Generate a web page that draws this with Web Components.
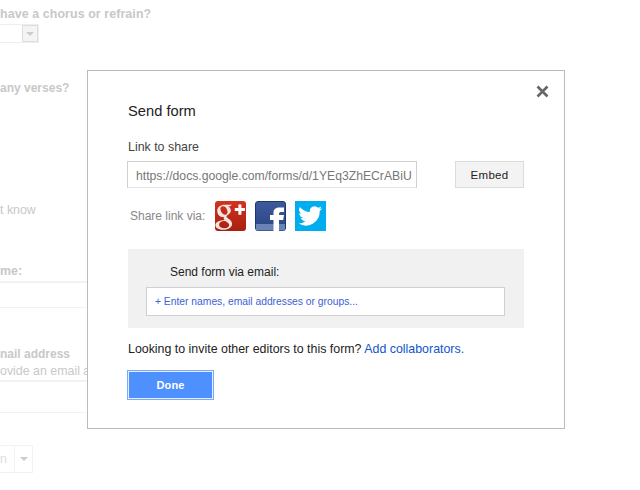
<!DOCTYPE html>
<html>
<head>
<meta charset="utf-8">
<title>Send form</title>
<style>
  html, body { margin: 0; height: 100%; overflow: hidden; background: #fff; font-family: "Liberation Sans", Arial, sans-serif; }
</style>
</head>
<body>
<form-page></form-page>
<send-dialog></send-dialog>

<script>
class FormPage extends HTMLElement {
  constructor() {
    super();
    this.attachShadow({ mode: 'open' });
    this.shadowRoot.innerHTML = `
    <style>
      :host { display: block; width: 640px; height: 490px; overflow: hidden; color: #c8c8c8; font-size: 12.4px; line-height: 16px; }
      .q { font-weight: bold; letter-spacing: .1px; white-space: nowrap; }
      .pick { display: flex; width: 38px; height: 17px; border: 1px solid #eee; border-left: 0; justify-content: flex-end; margin-top: 2px; }
      .pick span { width: 14px; border: 1px solid #ddd; background: #f4f4f4; display: flex; align-items: center; justify-content: center; }
      .arrow { width: 0; height: 0; border: 4px solid transparent; border-top: 4px solid #ccc; border-bottom: 0; }
      .line { width: 87px; height: 27px; border-top: 2px solid #f2f2f2; border-bottom: 1px solid #f2f2f2; box-sizing: border-box; }
      .btn { display: flex; box-sizing: border-box; width: 33px; height: 28px; border: 1px solid #f2f2f2; border-left: 0; align-items: center; color: #ddd; }
      .btn b { font-weight: normal; width: 14px; }
      .btn i { flex: 1; height: 100%; border-left: 1px solid #f2f2f2; display: flex; align-items: center; justify-content: center; }
      .a { margin-top: 6px; }
      .b { margin-top: 37px; font-size: 12px; letter-spacing: 0; }
      .c { margin-top: 106px; }
      .d { margin-top: 45px; }
      .e { margin-top: 2px; }
      .f { margin-top: 38px; font-size: 12px; letter-spacing: 0; }
      .g { margin-top: 1px; white-space: nowrap; }
      .h { margin-top: 1px; height: 33px; }
      .i { margin-top: 32px; }
    </style>
    <div class="a q">have a chorus or refrain?</div>
    <div class="pick"><span><i class="arrow"></i></span></div>
    <div class="b q">any verses?</div>
    <div class="c">t know</div>
    <div class="d q">me:</div>
    <div class="line e"></div>
    <div class="f q">nail address</div>
    <div class="g">ovide an email a</div>
    <div class="line h"></div>
    <div class="btn i"><b>n</b><i><span class="arrow"></span></i></div>
    `;
  }
}

class ShareIcon extends HTMLElement {
  constructor() {
    super();
    this.attachShadow({ mode: 'open' });
    const art = {
      gplus: `
        <defs><linearGradient id="g" x1="0" y1="0" x2="0" y2="1"><stop offset="0" stop-color="#d3321f"/><stop offset="1" stop-color="#a8200f"/></linearGradient></defs>
        <rect width="31" height="30" rx="3" fill="url(#g)"/>
        <path transform="translate(-1.200 .2) scale(1.150 1)" d="M3 9.500C3 5.800 6 3.600 9.500 3.600H16L14 5H12.400C14 6 14.800 7.600 14.800 9.300 14.800 12.600 11.600 13.600 11 15.200 10.600 16.600 15.500 18 15.900 22 16.300 26 12.600 28.500 8.400 28.500 4.400 28.500 1.400 26.800 1.400 24 1.400 20.800 5 19 9.400 18.800 8.600 17.800 8.200 17 8.800 15.900 4.800 16 3 13 3 9.500ZM5.800 8.400C6.200 11 7.800 13.600 9.800 13.600 11.600 13.600 12.200 11.800 11.800 9.600 11.400 7 9.800 5 7.900 5 6.200 5 5.500 6.400 5.800 8.400ZM4.600 23.600C4.600 25.600 6.600 27 9.200 27 11.800 27 13.400 25.700 13.400 23.800 13.400 22.200 12 21.100 9.900 19.800 7 19.600 4.600 21.200 4.600 23.600Z" fill="#f3e4e0"/>
        <path d="M23.400 3.500h3v3.600H30v3h-3.600v3.600h-3v-3.600h-3.600v-3h3.600z" fill="#fff"/>`,
      facebook: `
        <defs><linearGradient id="f" x1="0" y1="0" x2="0" y2="1"><stop offset="0" stop-color="#3d5a9a"/><stop offset="1" stop-color="#2a4586"/></linearGradient></defs>
        <rect x=".5" y=".5" width="30" height="29" rx="2.500" fill="url(#f)" stroke="#1d3670"/>
        <rect x="1" y="23" width="29" height="6.500" fill="#6a82b5"/>
        <path d="M18.500 30V19H15v-5h3.500v-2.500C18.500 8 21 6.500 24.500 6.500H29v4.500H26.500c-1.500 0-2.500.5-2.500 2V14h5l-.8 5H24v11z" fill="#fff"/>`,
      twitter: `
        <rect width="31" height="30" fill="#00adef"/>
        <path d="M27 7.300c-.9.400-1.800.7-2.800.8 1-.6 1.800-1.500 2.100-2.600-.9.600-2 1-3.100 1.200a4.900 4.900 0 0 0-8.300 4.400C10.900 10.900 7.300 9 4.900 6a4.900 4.900 0 0 0 1.500 6.500c-.8 0-1.500-.2-2.200-.6 0 2.400 1.700 4.400 3.900 4.900-.7.200-1.500.2-2.200.1.600 1.900 2.400 3.300 4.600 3.400A9.800 9.800 0 0 1 3.300 22.300 13.900 13.900 0 0 0 24.700 10c1-.7 1.700-1.600 2.300-2.700z" fill="#fff"/>`
    };
    this.shadowRoot.innerHTML = `
    <style>
      :host { display: block; width: 31px; height: 30px; }
      svg { display: block; }
    </style>
    <svg width="31" height="30" viewBox="0 0 31 30">${art[this.getAttribute('name')]}</svg>
    `;
  }
}

class FlatButton extends HTMLElement {
  constructor() {
    super();
    this.attachShadow({ mode: 'open' });
    this.shadowRoot.innerHTML = `
    <style>
      :host { display: flex; box-sizing: border-box; align-items: center; justify-content: center; width: 69px; height: 27px; font-size: 11.5px; color: #222; background: #f3f3f3; border: 1px solid #dcdcdc; letter-spacing: .3px; }
      :host([primary]) { width: 87px; height: 30px; font-size: 11px; font-weight: bold; letter-spacing: .1px; color: #fff; background: #4d90fe; border: 1px solid #7baaf7; box-shadow: inset 0 0 0 1px #e6efff; }
    </style>
    <slot></slot>
    `;
  }
}

class SendDialog extends HTMLElement {
  constructor() {
    super();
    this.attachShadow({ mode: 'open' });
    this.shadowRoot.innerHTML = `
    <style>
      :host { position: fixed; left: 87px; top: 70px; box-sizing: border-box; width: 478px; height: 359px; padding: 30px 40px 0 39px; background: #fff; border: 1px solid #bbb; color: #222; font-size: 12.4px; line-height: 16px; display: block; }
      #close { position: absolute; left: 448px; top: 14px; }
      h1 { margin: 0 0 0 1px; font-size: 14.7px; font-weight: normal; line-height: 20px; color: #222; }
      .label { margin: 18px 0 0 1px; color: #444; }
      .link-row { display: flex; justify-content: space-between; margin-top: 6px; }
      .url { box-sizing: border-box; width: 290px; height: 27px; padding: 2px 0 0 8px; line-height: 25px; border: 1px solid #d0d0d0; border-bottom-color: #e4e4e4; color: #777; overflow: hidden; white-space: nowrap; font-size: 12.2px; }
      .share { display: flex; align-items: center; margin-top: 13px; padding-left: 3px; color: #888; height: 30px; font-size: 12px; }
      .share share-icon { margin-left: 9px; }
      .share share-icon:first-of-type { margin-left: 10px; }
      .panel { box-sizing: border-box; height: 79px; margin-top: 18px; margin-left: 1px; width: 396px; padding: 15px 19px 0 18px; background: #f1f1f1; }
      .panel p { margin: 0 0 0 24px; color: #222; font-size: 12px; }
      .recipients { box-sizing: border-box; height: 29px; margin-top: 7px; padding-left: 8px; line-height: 27px; background: #fff; border: 1px solid #d0d0d0; color: #3b62d6; font-size: 10.3px; white-space: nowrap; }
      .invite { margin: 13px 0 0 1px; color: #222; }
      a { color: #15c; text-decoration: none; }
      .done { margin-top: 13px; }
    </style>
    <svg id="close" width="13" height="13" viewBox="0 0 13 13"><path d="M1.500 1.500l10 10M11.500 1.500l-10 10" stroke="#666" stroke-width="2.600" fill="none"/></svg>
    <h1>Send form</h1>
    <div class="label">Link to share</div>
    <div class="link-row">
      <div class="url">https://docs.google.com/forms/d/1YEq3ZhECrABiU</div>
      <flat-button>Embed</flat-button>
    </div>
    <div class="share">Share link via:
      <share-icon name="gplus"></share-icon>
      <share-icon name="facebook"></share-icon>
      <share-icon name="twitter"></share-icon>
    </div>
    <div class="panel">
      <p>Send form via email:</p>
      <div class="recipients">+ Enter names, email addresses or groups...</div>
    </div>
    <div class="invite">Looking to invite other editors to this form? <a>Add collaborators.</a></div>
    <div class="done"><flat-button primary>Done</flat-button></div>
    `;
  }
}

customElements.define('form-page', FormPage);
customElements.define('share-icon', ShareIcon);
customElements.define('flat-button', FlatButton);
customElements.define('send-dialog', SendDialog);
</script>
</body>
</html>
